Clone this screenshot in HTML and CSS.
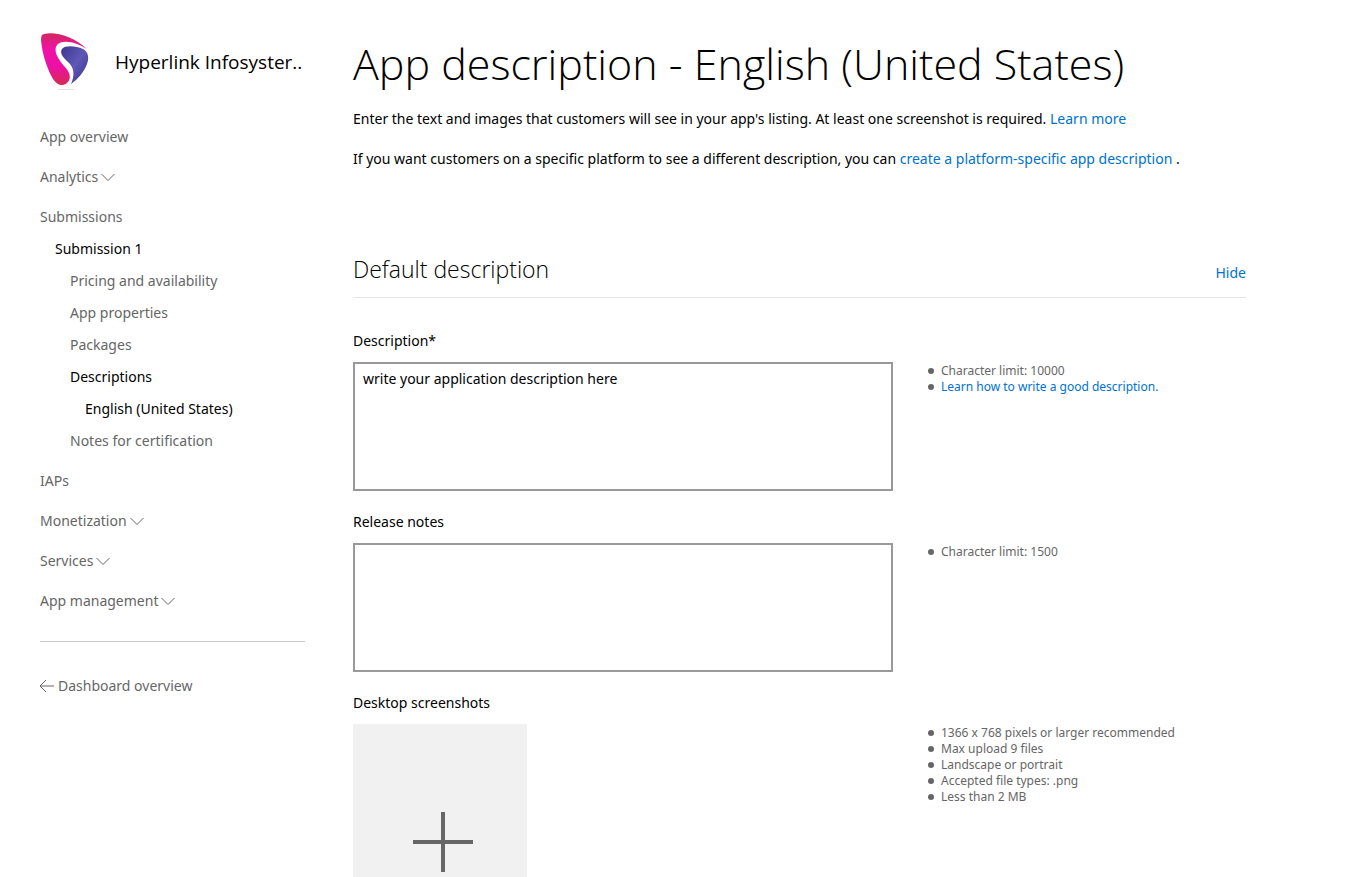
FILE: index.html
```html
<!DOCTYPE html>
<html lang="en">
<head>
<meta charset="utf-8">
<title>App description - English (United States)</title>
<link rel="stylesheet" href="styles.css">
</head>
<body>
<div class="page">
  <aside class="sidebar">
    <div class="brand">
      <svg class="logo" viewBox="0 0 50 60" aria-hidden="true">
        <defs>
          <linearGradient id="pink" x1="0" y1="0" x2="0" y2="1">
            <stop offset="0" stop-color="#cf2a5c"/>
            <stop offset=".3" stop-color="#f012a8"/>
            <stop offset=".65" stop-color="#ec10a4"/>
            <stop offset="1" stop-color="#d62c50"/>
          </linearGradient>
          <linearGradient id="violet" x1="0" y1="0" x2="1" y2="1">
            <stop offset="0" stop-color="#3e3590"/>
            <stop offset=".5" stop-color="#5f58b6"/>
            <stop offset="1" stop-color="#38308a"/>
          </linearGradient>
        </defs>
        <path fill="url(#pink)" d="M4 2C14-1 34 4 47 17C36 10 22 7 17 13C13 19 18 27 24 34C30 40 32 46 27 51C22 55 17 53 13 47C8 39 2 22 1 8C1 4 2 2 4 2Z"/>
        <path fill="url(#violet)" d="M22 17C25 13 36 14 43 17C49 20 49 27 47 32C44 40 38 47 31 52C35 43 34 36 29 31C24 26 19 22 22 17Z"/>
        <path fill="#e4e4e4" d="M18 57H34V58H18Z"/>
      </svg>
      <span class="brand-name">Hyperlink Infosyster..</span>
    </div>
    <nav class="nav" aria-label="App">
      <a class="item" href="#">App overview</a>
      <button class="item" type="button">Analytics<svg class="chevron" viewBox="0 0 16 16" aria-hidden="true"><path d="M1.5 5L8 11.5L14.500 5"/></svg></button>
      <a class="item" href="#">Submissions</a>
      <div class="sub">
        <a class="subitem current" href="#">Submission 1</a>
        <div class="sub">
          <a class="subitem" href="#">Pricing and availability</a>
          <a class="subitem" href="#">App properties</a>
          <a class="subitem" href="#">Packages</a>
          <a class="subitem current" href="#">Descriptions</a>
          <div class="sub">
            <a class="subitem current" href="#">English (United States)</a>
          </div>
          <a class="subitem" href="#">Notes for certification</a>
        </div>
      </div>
      <a class="item" href="#">IAPs</a>
      <button class="item" type="button">Monetization<svg class="chevron" viewBox="0 0 16 16" aria-hidden="true"><path d="M1.5 5L8 11.5L14.500 5"/></svg></button>
      <button class="item" type="button">Services<svg class="chevron" viewBox="0 0 16 16" aria-hidden="true"><path d="M1.5 5L8 11.5L14.500 5"/></svg></button>
      <button class="item" type="button">App management<svg class="chevron" viewBox="0 0 16 16" aria-hidden="true"><path d="M1.5 5L8 11.5L14.500 5"/></svg></button>
    </nav>
    <a class="back" href="#"><svg class="arrow" viewBox="0 0 16 16" aria-hidden="true"><path d="M14 8H0M6 2L0 8L6 14"/></svg>Dashboard overview</a>
  </aside>

  <main class="main">
    <h1 class="title">App description - English (United States)</h1>
    <p class="intro">Enter the text and images that customers will see in your app's listing. At least one screenshot is required. <a class="link" href="#">Learn more</a></p>
    <p class="intro">If you want customers on a specific platform to see a different description, you can <a class="link" href="#">create a platform-specific app description</a> .</p>

    <div class="section-head">
      <h2 class="section-title">Default description</h2>
      <button class="hide" type="button">Hide</button>
    </div>

    <section class="field">
      <label class="label" for="description">Description*</label>
      <div class="row">
        <textarea class="box" id="description">write your application description here</textarea>
        <ul class="hints">
          <li>Character limit: 10000</li>
          <li><a class="link" href="#">Learn how to write a good description.</a></li>
        </ul>
      </div>
    </section>

    <section class="field">
      <label class="label" for="notes">Release notes</label>
      <div class="row">
        <textarea class="box" id="notes"></textarea>
        <ul class="hints">
          <li>Character limit: 1500</li>
        </ul>
      </div>
    </section>

    <section class="field">
      <h3 class="label">Desktop screenshots</h3>
      <div class="row">
        <div class="shots">
          <button class="upload" type="button" aria-label="Add desktop screenshot"><svg class="plus" viewBox="0 0 60 60" aria-hidden="true"><path d="M30 0V60M0 30H60"/></svg></button>
        </div>
        <ul class="hints">
          <li>1366 x 768 pixels or larger recommended</li>
          <li>Max upload 9 files</li>
          <li>Landscape or portrait</li>
          <li>Accepted file types: .png</li>
          <li>Less than 2 MB</li>
        </ul>
      </div>
    </section>
  </main>
</div>
</body>
</html>
```

FILE: styles.css
```css
* { box-sizing: border-box; }

html { height: 100%; }

body {
  margin: 0;
  height: 100%;
  overflow: hidden;
  background: #fff;
  color: #000;
  font: 14px/20px "Segoe UI", "Noto Sans", "Open Sans", sans-serif;
}

a { text-decoration: none; }

button {
  border: 0;
  padding: 0;
  background: none;
  font: inherit;
  cursor: pointer;
}

.page {
  display: flex;
  gap: 48px;
  padding: 32px 125px 0 40px;
}

.sidebar { flex: 0 0 265px; }

.brand {
  display: flex;
  align-items: center;
  gap: 25px;
  height: 60px;
  margin-bottom: 25px;
}

.logo { width: 50px; height: 60px; }

.brand-name {
  font-family: "Segoe UI", "Open Sans", sans-serif;
  font-size: 19px;
  line-height: 24px;
  white-space: nowrap;
}

.nav {
  display: flex;
  flex-direction: column;
  align-items: flex-start;
  padding-bottom: 20px;
  border-bottom: 1px solid #ccc;
}

.item,
.subitem {
  display: flex;
  align-items: center;
  color: #666;
}

.item { height: 40px; }
.subitem { height: 32px; }
.sub { padding-left: 15px; }
.nav > .sub { margin-top: -4px; margin-bottom: 4px; }
.current,
.subitem.current { color: #000; }

.chevron,
.arrow,
.plus {
  fill: none;
  stroke: #666;
}

.chevron { width: 16px; height: 16px; margin-left: 2px; }
.arrow { width: 16px; height: 16px; margin-right: 2px; overflow: visible; }

.back {
  display: flex;
  align-items: center;
  margin-top: 34px;
  color: #666;
}

.main { flex: 1; min-width: 0; }

.title {
  margin: 0 0 13px;
  font-family: "Segoe UI", "Open Sans", sans-serif;
  font-size: 43px;
  font-weight: 300;
  line-height: 64px;
}

.intro { margin: 0 0 20px; }
.link { color: #0072d0; }

.section-head {
  display: flex;
  justify-content: space-between;
  align-items: baseline;
  margin-top: 82px;
  padding-bottom: 10px;
  border-bottom: 1px solid #e5e5e5;
}

.section-title {
  margin: 0;
  font-family: "Segoe UI", "Open Sans", sans-serif;
  font-size: 23px;
  font-weight: 300;
  line-height: 36px;
}

.hide { color: #0072d0; }

.field { margin-top: 21px; }
.section-head + .field { margin-top: 33px; }

.label {
  display: block;
  margin: 0 0 11px;
  font-size: 14px;
  font-weight: 400;
  line-height: 20px;
}

.row {
  display: flex;
  align-items: flex-start;
  gap: 34px;
}

.box,
.shots { flex: 0 1 540px; }

.box {
  height: 129px;
  padding: 5px 8px;
  border: 2px solid #999;
  border-radius: 0;
  background: #fff;
  color: #000;
  font: inherit;
  resize: none;
}

.hints {
  flex: 1;
  margin: 0;
  padding: 1px 0 0;
  list-style: none;
  color: #666;
  font-size: 12px;
  line-height: 16px;
}

.hints li {
  display: flex;
  align-items: center;
  gap: 7px;
}

.hints li::before {
  content: "";
  width: 6px;
  height: 6px;
  margin-left: 1px;
  border-radius: 50%;
  background: #666;
}

.upload {
  display: flex;
  justify-content: center;
  width: 174px;
  height: 153px;
  padding: 88px 0 0 6px;
  background: #f1f1f1;
}

.plus {
  flex: none;
  width: 60px;
  height: 60px;
  stroke-width: 4;
}
```
